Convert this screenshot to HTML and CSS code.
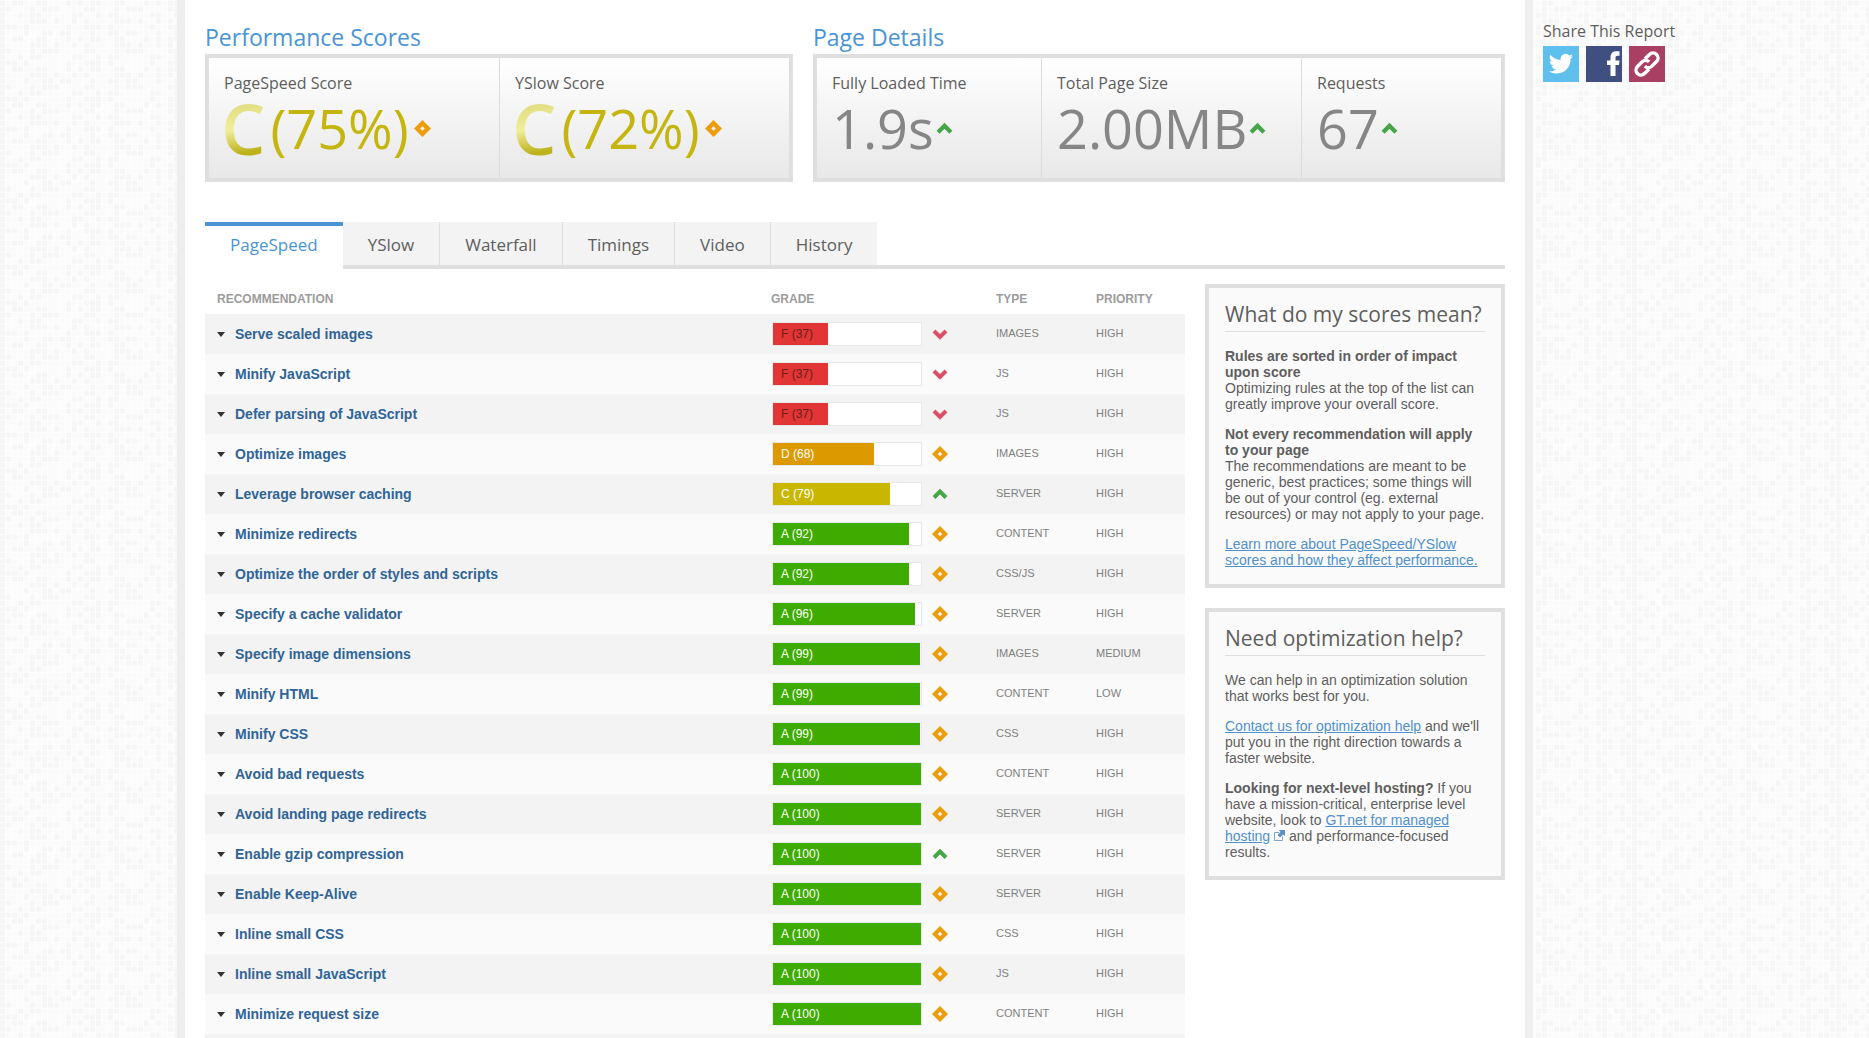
FILE: index.html
```html
<!DOCTYPE html>
<html lang="en">
<head>
<meta charset="utf-8">
<title>Performance Report</title>
<link rel="stylesheet" href="styles.css">
</head>
<body>
<svg class="sprite" aria-hidden="true">
  <symbol id="same" viewBox="0 0 16 16"><path fill="#eb9d0c" fill-rule="evenodd" d="M8 0l8 8-8 8-8-8zM8 5.800L5.800 8 8 10.200 10.200 8z"/></symbol>
  <symbol id="up" viewBox="0 0 16 16"><path fill="none" stroke="#46a546" stroke-width="4" d="M2 11.500l6-6 6 6"/></symbol>
  <symbol id="down" viewBox="0 0 16 16"><path fill="none" stroke="#db5064" stroke-width="4" d="M2 5l6 6 6-6"/></symbol>
</svg>
<div class="layout">
  <main class="report">
    <div class="summary">
      <section class="summary-scores">
        <h2>Performance Scores</h2>
        <div class="card card-scores">
          <div class="metric">
            <h3>PageSpeed Score</h3>
            <p class="score"><span class="grade">C</span><span class="value">(75%)</span><svg class="trend"><use href="#same"/></svg></p>
          </div>
          <div class="metric">
            <h3>YSlow Score</h3>
            <p class="score"><span class="grade">C</span><span class="value">(72%)</span><svg class="trend"><use href="#same"/></svg></p>
          </div>
        </div>
      </section>
      <section class="summary-details">
        <h2>Page Details</h2>
        <div class="card card-details">
          <div class="metric">
            <h3>Fully Loaded Time</h3>
            <p class="figure"><span class="value">1.9s</span><svg class="trend"><use href="#up"/></svg></p>
          </div>
          <div class="metric">
            <h3>Total Page Size</h3>
            <p class="figure"><span class="value">2.00MB</span><svg class="trend"><use href="#up"/></svg></p>
          </div>
          <div class="metric">
            <h3>Requests</h3>
            <p class="figure"><span class="value">67</span><svg class="trend"><use href="#up"/></svg></p>
          </div>
        </div>
      </section>
    </div>

    <nav class="tabs">
      <a class="tab active" href="#pagespeed">PageSpeed</a>
      <a class="tab" href="#yslow">YSlow</a>
      <a class="tab" href="#waterfall">Waterfall</a>
      <a class="tab" href="#timings">Timings</a>
      <a class="tab" href="#video">Video</a>
      <a class="tab" href="#history">History</a>
    </nav>

    <div class="content" id="pagespeed">
      <table class="rules">
        <thead>
          <tr><th class="col-name">Recommendation</th><th class="col-grade">Grade</th><th class="col-type">Type</th><th class="col-priority">Priority</th></tr>
        </thead>
        <tbody>
          <tr><td><a href="#r1">Serve scaled images</a></td><td><div class="result"><div class="bar f"><span style="width:37%">F (37)</span></div><svg><use href="#down"/></svg></div></td><td>Images</td><td>High</td></tr>
          <tr><td><a href="#r2">Minify JavaScript</a></td><td><div class="result"><div class="bar f"><span style="width:37%">F (37)</span></div><svg><use href="#down"/></svg></div></td><td>JS</td><td>High</td></tr>
          <tr><td><a href="#r3">Defer parsing of JavaScript</a></td><td><div class="result"><div class="bar f"><span style="width:37%">F (37)</span></div><svg><use href="#down"/></svg></div></td><td>JS</td><td>High</td></tr>
          <tr><td><a href="#r4">Optimize images</a></td><td><div class="result"><div class="bar d"><span style="width:68%">D (68)</span></div><svg><use href="#same"/></svg></div></td><td>Images</td><td>High</td></tr>
          <tr><td><a href="#r5">Leverage browser caching</a></td><td><div class="result"><div class="bar c"><span style="width:79%">C (79)</span></div><svg><use href="#up"/></svg></div></td><td>Server</td><td>High</td></tr>
          <tr><td><a href="#r6">Minimize redirects</a></td><td><div class="result"><div class="bar a"><span style="width:92%">A (92)</span></div><svg><use href="#same"/></svg></div></td><td>Content</td><td>High</td></tr>
          <tr><td><a href="#r7">Optimize the order of styles and scripts</a></td><td><div class="result"><div class="bar a"><span style="width:92%">A (92)</span></div><svg><use href="#same"/></svg></div></td><td>CSS/JS</td><td>High</td></tr>
          <tr><td><a href="#r8">Specify a cache validator</a></td><td><div class="result"><div class="bar a"><span style="width:96%">A (96)</span></div><svg><use href="#same"/></svg></div></td><td>Server</td><td>High</td></tr>
          <tr><td><a href="#r9">Specify image dimensions</a></td><td><div class="result"><div class="bar a"><span style="width:99%">A (99)</span></div><svg><use href="#same"/></svg></div></td><td>Images</td><td>Medium</td></tr>
          <tr><td><a href="#r10">Minify HTML</a></td><td><div class="result"><div class="bar a"><span style="width:99%">A (99)</span></div><svg><use href="#same"/></svg></div></td><td>Content</td><td>Low</td></tr>
          <tr><td><a href="#r11">Minify CSS</a></td><td><div class="result"><div class="bar a"><span style="width:99%">A (99)</span></div><svg><use href="#same"/></svg></div></td><td>CSS</td><td>High</td></tr>
          <tr><td><a href="#r12">Avoid bad requests</a></td><td><div class="result"><div class="bar a"><span style="width:100%">A (100)</span></div><svg><use href="#same"/></svg></div></td><td>Content</td><td>High</td></tr>
          <tr><td><a href="#r13">Avoid landing page redirects</a></td><td><div class="result"><div class="bar a"><span style="width:100%">A (100)</span></div><svg><use href="#same"/></svg></div></td><td>Server</td><td>High</td></tr>
          <tr><td><a href="#r14">Enable gzip compression</a></td><td><div class="result"><div class="bar a"><span style="width:100%">A (100)</span></div><svg><use href="#up"/></svg></div></td><td>Server</td><td>High</td></tr>
          <tr><td><a href="#r15">Enable Keep-Alive</a></td><td><div class="result"><div class="bar a"><span style="width:100%">A (100)</span></div><svg><use href="#same"/></svg></div></td><td>Server</td><td>High</td></tr>
          <tr><td><a href="#r16">Inline small CSS</a></td><td><div class="result"><div class="bar a"><span style="width:100%">A (100)</span></div><svg><use href="#same"/></svg></div></td><td>CSS</td><td>High</td></tr>
          <tr><td><a href="#r17">Inline small JavaScript</a></td><td><div class="result"><div class="bar a"><span style="width:100%">A (100)</span></div><svg><use href="#same"/></svg></div></td><td>JS</td><td>High</td></tr>
          <tr><td><a href="#r18">Minimize request size</a></td><td><div class="result"><div class="bar a"><span style="width:100%">A (100)</span></div><svg><use href="#same"/></svg></div></td><td>Content</td><td>High</td></tr>
        </tbody>
        <tfoot><tr><td colspan="4"></td></tr></tfoot>
      </table>

      <aside class="side">
        <section class="panel">
          <h3>What do my scores mean?</h3>
          <p><strong>Rules are sorted in order of impact upon score</strong><br>Optimizing rules at the top of the list can greatly improve your overall score.</p>
          <p><strong>Not every recommendation will apply to your page</strong><br>The recommendations are meant to be generic, best practices; some things will be out of your control (eg. external resources) or may not apply to your page.</p>
          <p><a href="#learn">Learn more about PageSpeed/YSlow scores and how they affect performance.</a></p>
        </section>
        <section class="panel">
          <h3>Need optimization help?</h3>
          <p>We can help in an optimization solution that works best for you.</p>
          <p><a href="#contact">Contact us for optimization help</a> and we'll put you in the right direction towards a faster website.</p>
          <p><strong>Looking for next-level hosting?</strong> If you have a mission-critical, enterprise level website, look to <a href="#hosting">GT.net for managed hosting</a> <svg class="external" viewBox="0 0 11 11"><path fill="none" stroke="#7aa5cc" d="M5 2.500H.5v8h8V6.500"/><path fill="#5b90c3" d="M5 0h6v6L9 4.500 6 7.500 3.500 5l3-3z"/></svg> and performance-focused results.</p>
        </section>
      </aside>
    </div>
  </main>

  <aside class="share">
    <h4>Share This Report</h4>
    <div class="share-links">
      <a class="twitter" href="#twitter" aria-label="Twitter"><svg viewBox="0 0 36 36"><path fill="#fff" d="M30 10.200c-.9.4-1.800.7-2.800.8 1-.6 1.800-1.600 2.200-2.700-1 .6-2 1-3.200 1.200a5 5 0 0 0-8.500 4.500c-4.100-.2-7.800-2.200-10.300-5.200-1.300 2.300-.7 5.200 1.600 6.700-.8 0-1.600-.3-2.200-.6 0 2.400 1.700 4.400 4 4.900-.7.2-1.500.2-2.200.1.600 2 2.400 3.400 4.600 3.400-2 1.600-4.600 2.300-7.200 2 2.200 1.400 4.800 2.200 7.600 2.200 9.200 0 14.300-7.700 14-14.700.9-.7 1.800-1.600 2.400-2.600z"/></svg></a>
      <a class="facebook" href="#facebook" aria-label="Facebook"><svg viewBox="0 0 36 36"><path fill="#fff" d="M24.500 30V19H21v-4.500h3.500v-3.200c0-3.900 2-6 6-6h3v4.500h-2c-1.600 0-2 .7-2 2v2.700h4l-.5 4.500h-3.500v11z"/></svg></a>
      <a class="link" href="#link" aria-label="Link"><svg viewBox="0 0 36 36"><g fill="none" stroke="#fff" stroke-width="3.400" transform="rotate(-45 18 18)"><path d="M16 23H9.500a5 5 0 0 1 0-10H16a5 5 0 0 1 5 5"/><path d="M20 13h6.500a5 5 0 0 1 0 10H20a5 5 0 0 1-5-5"/></g></svg></a>
    </div>
  </aside>
</div>
</body>
</html>
```
FILE: styles.css
```css
* { box-sizing: border-box; }

body {
  margin: 0;
  font-family: "Liberation Sans", Arial, sans-serif;
  font-size: 14px;
  line-height: 16px;
  color: #5e5e5e;
  background-color: #fff;
  /* woven paper texture: rows of faint square cells */
  background-image:
    url("data:image/svg+xml,%3Csvg xmlns='http://www.w3.org/2000/svg' width='204' height='102'%3E%3Cg fill='none' stroke='%23000' stroke-width='5' stroke-opacity='.018'%3E%3Cpath stroke-dasharray='5 7 5 1 5 13 5 1 5 19 5 7' d='M0 3h204M0 39h204M0 69h204'/%3E%3Cpath stroke-dasharray='5 1 5 19 5 7 5 1 5 1 5 25' d='M0 9h204M0 51h204M0 87h204'/%3E%3Cpath stroke-dasharray='5 13 5 7 5 1 5 31 5 1' d='M0 15h204M0 57h204M0 93h204'/%3E%3Cpath stroke-dasharray='5 25 5 1 5 1 5 7 5 13 5 7' d='M0 21h204M0 45h204M0 75h204'/%3E%3Cpath stroke-dasharray='5 1 5 1 5 7 5 37 5 13' d='M0 27h204M0 63h204M0 99h204'/%3E%3Cpath stroke-dasharray='5 19 5 13 5 1 5 7 5 1' d='M0 33h204M0 81h204'/%3E%3C/g%3E%3C/svg%3E"),
    repeating-linear-gradient(90deg, rgba(0,0,0,.008) 0 5px, transparent 5px 6px),
    repeating-linear-gradient(0deg, rgba(0,0,0,.008) 0 5px, transparent 5px 6px);
}

h2, h3, h4, p { margin: 0; }

h2, h3, h4, .tab, .score, .figure {
  font-family: "Open Sans", "Noto Sans", sans-serif;
  font-weight: 400;
}

.sprite { position: absolute; width: 0; height: 0; }

.layout {
  display: flex;
  align-items: flex-start;
  max-width: 1515px;
  margin: 0 auto;
}

.report {
  flex: 1;
  min-width: 0;
  min-height: 100vh;
  padding: 20px 20px 0;
  background: #fff;
  border: solid #eee;
  border-width: 0 8px;
}

.summary { display: flex; gap: 20px; }
.summary-scores { flex: 588 1 0; }
.summary-details { flex: 692 1 0; }

h2 {
  height: 34px;
  font-size: 23px;
  line-height: 34px;
  color: #4a94d6;
}

.card {
  display: grid;
  height: 128px;
  border: 4px solid #dfdfdf;
  background: linear-gradient(#fff, #e8e8e8);
}
.card-scores { grid-template-columns: 1fr 1fr; }
.card-details { grid-template-columns: 224fr 260fr 200fr; }

.metric { padding: 12px 0 0 15px; }
.metric + .metric { border-left: 1px solid #dcdcdc; }

.metric h3 { font-size: 16px; line-height: 26px; }

.score, .figure {
  display: flex;
  align-items: center;
  height: 64px;
  font-size: 54px;
  line-height: 64px;
  color: #868686;
}
.score { gap: 5px; color: #c5b60f; }
.figure { gap: 2px; }

.grade {
  margin-left: -3px;
  font-size: 70px;
  font-weight: 600;
  color: transparent;
  background: linear-gradient(170deg, #e0dc80 15%, #f0ee9a 50%, #bdb21b 85%);
  -webkit-background-clip: text;
  background-clip: text;
}

.trend { width: 17px; height: 17px; }

.tabs {
  display: flex;
  margin-top: 40px;
  height: 47px;
  background: linear-gradient(#dfdfdf, #dfdfdf) bottom / 100% 4px no-repeat;
}
.tab {
  height: 43px;
  padding: 0 25px;
  font-size: 17px;
  line-height: 45px;
  color: #5e5e5e;
  text-decoration: none;
  background: #f3f3f3;
}
.tab + .tab + .tab { border-left: 1px solid #dfdfdf; }
.tab.active {
  height: 47px;
  line-height: 37px;
  color: #4a94d6;
  background: #fff;
  border-top: 4px solid #4a94d6;
}

.content {
  display: flex;
  align-items: flex-start;
  gap: 20px;
  padding-top: 14px;
}

.rules {
  flex: 1;
  min-width: 0;
  table-layout: fixed;
  border-collapse: collapse;
  font-size: 11px;
  text-transform: uppercase;
  color: #808080;
}
.rules th {
  height: 31px;
  padding: 0;
  font-size: 12px;
  text-align: left;
  color: #9c9c9c;
}
.rules td { height: 40px; padding: 0 0 2px; }
.rules th:first-child, .rules td:first-child { padding: 0 0 0 12px; }
.rules tr > :nth-child(2) { padding-bottom: 0; }
.rules tbody tr:nth-child(odd) { background: #f3f3f3; }
.rules tbody tr:nth-child(even) { background: #fafafa; }
.rules tfoot td:first-child { height: 4px; padding: 0; background: #f3f3f3; }
.col-name { width: 566px; }
.col-grade { width: 225px; }
.col-type { width: 100px; }

.rules a {
  display: flex;
  align-items: center;
  gap: 10px;
  font-size: 14px;
  font-weight: bold;
  text-transform: none;
  text-decoration: none;
  color: #2f6497;
}
.rules a::before {
  content: "";
  border: solid transparent;
  border-width: 5px 4px 0;
  border-top-color: #333;
}

.result { display: flex; align-items: center; gap: 10px; padding-left: 1px; }
.result svg { width: 16px; height: 16px; }
.bar {
  width: 150px;
  height: 24px;
  border: 1px solid #e8e8e8;
  background: #fff;
}
.bar span {
  display: block;
  height: 22px;
  padding-left: 8px;
  font-size: 12px;
  line-height: 22px;
  color: #fff;
  white-space: nowrap;
}
.f span { background: #e23535; color: #6b2020; }
.d span { background: #dc9a00; }
.c span { background: #c8b600; }
.a span { background: #3dab00; }

.side {
  flex: none;
  width: 300px;
  display: grid;
  grid-template-columns: minmax(0, 1fr);
  gap: 20px;
  padding-top: 1px;
}
.panel {
  display: grid;
  grid-template-columns: minmax(0, 1fr);
  gap: 14px;
  padding: 12px 16px 16px;
  border: 4px solid #dfdfdf;
  background: #fafafa;
}
.panel h3 {
  height: 32px;
  margin-bottom: 2px;
  font-size: 21px;
  line-height: 28px;
  border-bottom: 1px solid #dfdfdf;
  white-space: nowrap;
}
.panel a { color: #5090cc; }
.external { width: 11px; height: 11px; }

.share { width: 159px; padding: 20px 0 0 10px; }
.share h4 { font-size: 16px; line-height: 22px; white-space: nowrap; }
.share-links { display: flex; gap: 7px; padding-top: 4px; }
.share-links a { width: 36px; height: 36px; }
.share-links svg { display: block; width: 36px; height: 36px; }
.twitter { background: #5fc0ee; }
.facebook { background: #3f5080; }
.link { background: #a94064; }
```
